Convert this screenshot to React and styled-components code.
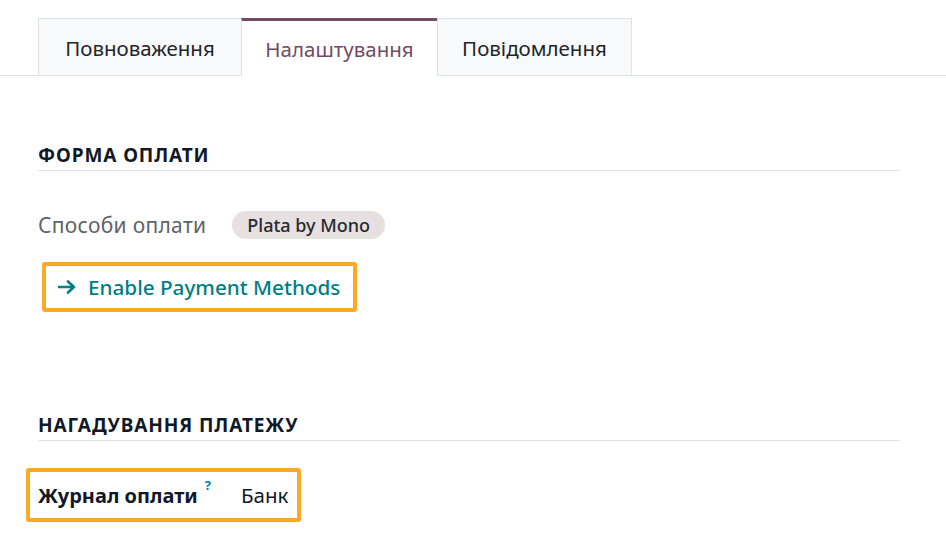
import React from 'react';
import styled, { createGlobalStyle } from 'styled-components';

const GlobalStyle = createGlobalStyle`
  body {
    margin: 0;
    background: #fff;
    font-family: "Noto Sans", "Open Sans", sans-serif;
    color: #212529;
  }
`;

const Page = styled.div`
  width: 946px;
  height: 544px;
  overflow: hidden;
  padding-top: 18px;
  box-sizing: border-box;
`;

const TabBar = styled.div`
  display: flex;
  padding-left: 39px;
  border-bottom: 1px solid #dee2e6;
  height: 58px;
  box-sizing: border-box;
`;

const Tab = styled.div`
  display: flex;
  align-items: center;
  justify-content: center;
  width: ${p => p.w}px;
  height: ${p => (p.active ? 58 : 57)}px;
  box-sizing: border-box;
  border: 1px solid #dee2e6;
  border-top: ${p => (p.active ? '3px solid #714b67' : '1px solid #dee2e6')};
  border-bottom: none;
  margin-left: -1px;
  background: ${p => (p.active ? '#fff' : '#f8f9fa')};
  color: ${p => (p.active ? '#714b67' : '#212529')};
  font-size: 20.5px;
  padding-top: ${p => (p.active ? 0 : 2)}px;
`;

const Content = styled.div`
  padding: 0 46px 0 38px;
`;

const SectionHeader = styled.div`
  font-size: 19px;
  font-weight: 700;
  letter-spacing: 0.9px;
  line-height: 24px;
  color: #111827;
  border-bottom: 1px solid #dee2e6;
  padding-bottom: 3px;
  margin-top: ${p => p.top}px;
`;

const FieldRow = styled.div`
  display: flex;
  align-items: center;
  gap: 26px;
  margin-top: 40px;
`;

const Label = styled.span`
  font-size: ${p => (p.bold ? 20 : 21)}px;
  letter-spacing: ${p => (p.bold ? 0 : 0.3)}px;
  color: ${p => (p.muted ? '#5f6368' : '#111827')};
  font-weight: ${p => (p.bold ? 700 : 400)};
`;

const Badge = styled.span`
  background: #e7e0e0;
  border-radius: 14px;
  padding: 0 15px;
  height: 28px;
  display: inline-flex;
  align-items: center;
  font-size: 18px;
  font-weight: 500;
  color: #262b31;
`;

const Highlight = styled.div`
  display: inline-flex;
  align-items: center;
  border: 4px solid #ffa726;
  border-radius: 3px;
  box-sizing: border-box;
  height: ${p => p.h}px;
  margin-left: ${p => p.offset}px;
  margin-top: ${p => p.top}px;
  padding: 0 ${p => p.pad + 1}px 0 ${p => p.pad}px;
  gap: ${p => p.gap}px;
`;

const LinkButton = styled.span`
  display: inline-flex;
  align-items: center;
  gap: 10px;
  font-size: 20.7px;
  font-weight: 500;
  color: #017e84;
`;

const Help = styled.sup`
  color: #0180a5;
  font-size: 13px;
  font-weight: 700;
  margin-left: 7px;
  position: relative;
  top: -5px;
`;

const Value = styled.span`
  font-size: 20.5px;
  color: #111827;
`;

function Arrow() {
  return (
    <svg width="20" height="16" viewBox="0 0 20 16" fill="none">
      <path d="M1 8h15M10 2.5 16 8l-6 5.5" stroke="#017e84" strokeWidth="2.6" strokeLinecap="round" strokeLinejoin="round" />
    </svg>
  );
}

export default function App() {
  return (
    <>
      <GlobalStyle />
      <Page>
        <TabBar>
          <Tab w={204}>Повноваження</Tab>
          <Tab w={197} active>Налаштування</Tab>
          <Tab w={195}>Повідомлення</Tab>
        </TabBar>
        <Content>
          <SectionHeader top={67}>ФОРМА ОПЛАТИ</SectionHeader>
          <FieldRow>
            <Label muted>Способи оплати</Label>
            <Badge>Plata by Mono</Badge>
          </FieldRow>
          <Highlight h={50} offset={4} top={23} pad={12}>
            <LinkButton>
              <Arrow />
              Enable Payment Methods
            </LinkButton>
          </Highlight>
          <SectionHeader top={101}>НАГАДУВАННЯ ПЛАТЕЖУ</SectionHeader>
          <Highlight h={54} offset={-12} top={27} pad={8} gap={30}>
            <Label bold>
              Журнал оплати<Help>?</Help>
            </Label>
            <Value>Банк</Value>
          </Highlight>
        </Content>
      </Page>
    </>
  );
}
